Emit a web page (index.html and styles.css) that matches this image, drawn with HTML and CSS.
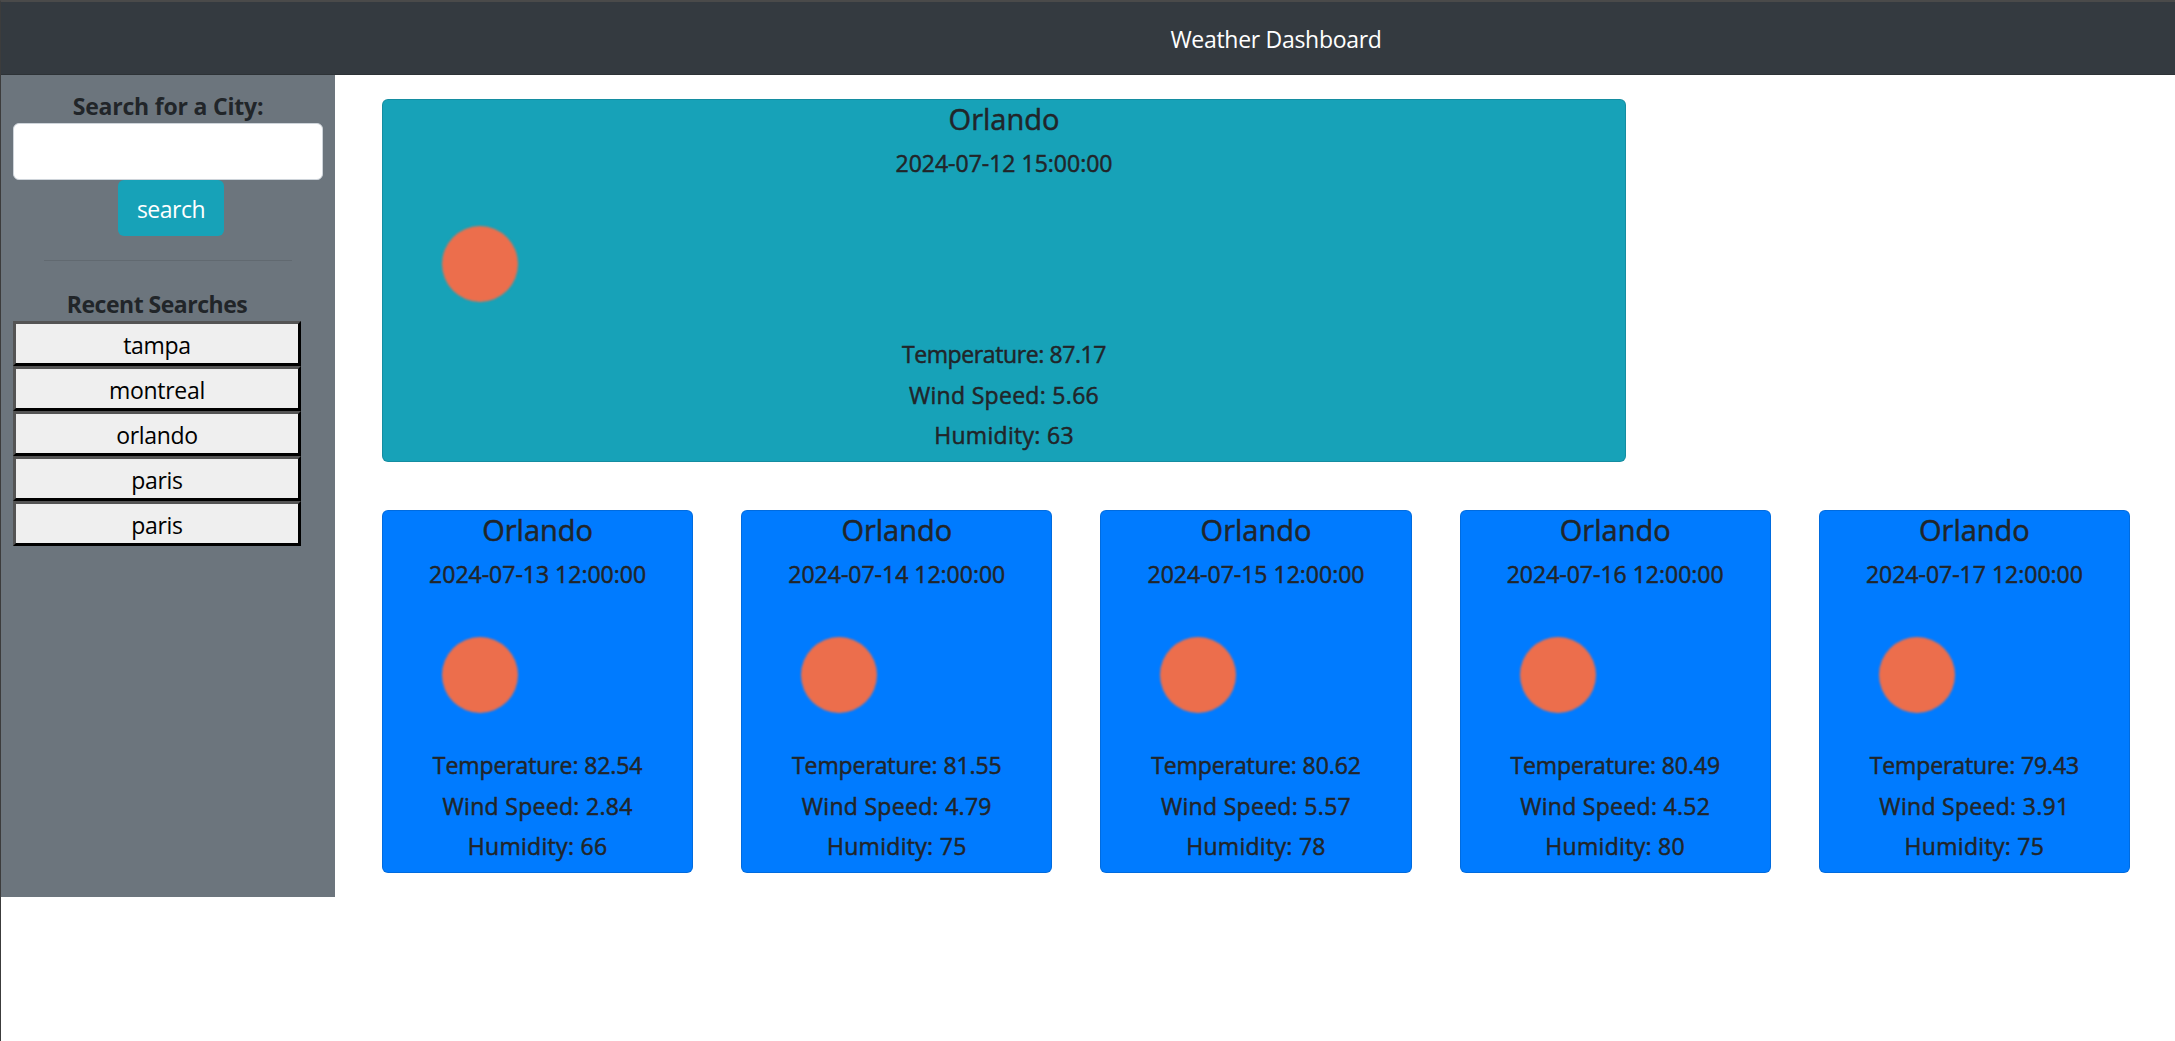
FILE: index.html
```
<!DOCTYPE html>
<html lang="en">
<head>
<meta charset="utf-8">
<title>Weather Dashboard</title>
<link rel="stylesheet" href="styles.css">
</head>
<body>
<header class="navbar"><span class="brand">Weather Dashboard</span></header>
<div class="layout">
  <aside class="sidebar">
    <form class="search">
      <label class="label" for="city">Search for a City:</label>
      <input class="input" id="city" type="text">
      <button class="submit" type="button">search</button>
    </form>
    <hr class="divider">
    <section class="recent">
      <h2 class="recent-title">Recent Searches</h2>
      <button class="recent-item" type="button">tampa</button>
      <button class="recent-item" type="button">montreal</button>
      <button class="recent-item" type="button">orlando</button>
      <button class="recent-item" type="button">paris</button>
      <button class="recent-item" type="button">paris</button>
    </section>
  </aside>
  <main class="content">
    <article class="card today">
      <h3 class="city">Orlando</h3>
      <p class="date">2024-07-12 15:00:00</p>
      <svg class="icon" viewBox="0 0 150 150"><circle cx="75" cy="75" r="38"/></svg>
      <p class="stat temperature">Temperature: 87.17</p>
      <p class="stat">Wind Speed: 5.66</p>
      <p class="stat">Humidity: 63</p>
    </article>
    <div class="forecast">
      <article class="card">
        <h3 class="city">Orlando</h3>
        <p class="date">2024-07-13 12:00:00</p>
        <svg class="icon" viewBox="0 0 150 150"><circle cx="75" cy="75" r="38"/></svg>
        <p class="stat temperature">Temperature: 82.54</p>
        <p class="stat">Wind Speed: 2.84</p>
        <p class="stat">Humidity: 66</p>
      </article>
      <article class="card">
        <h3 class="city">Orlando</h3>
        <p class="date">2024-07-14 12:00:00</p>
        <svg class="icon" viewBox="0 0 150 150"><circle cx="75" cy="75" r="38"/></svg>
        <p class="stat temperature">Temperature: 81.55</p>
        <p class="stat">Wind Speed: 4.79</p>
        <p class="stat">Humidity: 75</p>
      </article>
      <article class="card">
        <h3 class="city">Orlando</h3>
        <p class="date">2024-07-15 12:00:00</p>
        <svg class="icon" viewBox="0 0 150 150"><circle cx="75" cy="75" r="38"/></svg>
        <p class="stat temperature">Temperature: 80.62</p>
        <p class="stat">Wind Speed: 5.57</p>
        <p class="stat">Humidity: 78</p>
      </article>
      <article class="card">
        <h3 class="city">Orlando</h3>
        <p class="date">2024-07-16 12:00:00</p>
        <svg class="icon" viewBox="0 0 150 150"><circle cx="75" cy="75" r="38"/></svg>
        <p class="stat temperature">Temperature: 80.49</p>
        <p class="stat">Wind Speed: 4.52</p>
        <p class="stat">Humidity: 80</p>
      </article>
      <article class="card">
        <h3 class="city">Orlando</h3>
        <p class="date">2024-07-17 12:00:00</p>
        <svg class="icon" viewBox="0 0 150 150"><circle cx="75" cy="75" r="38"/></svg>
        <p class="stat temperature">Temperature: 79.43</p>
        <p class="stat">Wind Speed: 3.91</p>
        <p class="stat">Humidity: 75</p>
      </article>
    </div>
  </main>
</div>
</body>
</html>
```
FILE: styles.css
```
* { box-sizing: border-box; }

body {
  margin: 0;
  min-height: 1041px;
  border-top: 2px solid #4a4a4a;
  border-left: 1px solid #3c3c3c;
  background: #fff;
  color: #212529;
  font-family: "Segoe UI", "Open Sans", "Noto Sans", sans-serif;
  font-size: 23px;
  line-height: 36px;
}

h2, h3, p { margin: 0; }

.navbar {
  display: flex;
  justify-content: center;
  height: 73px;
  padding: 19px 0 0 376px;
  border-bottom: 1px solid #2d3236;
  background: #343a40;
  color: #fff;
  letter-spacing: -0.3px;
}

.layout {
  display: flex;
  align-items: flex-start;
}

.sidebar {
  width: 334px;
  height: 822px;
  padding: 12px;
  background: #6c757d;
}

.search {
  display: flex;
  flex-direction: column;
  align-items: center;
}

.label {
  height: 36px;
  padding-top: 1px;
  font-weight: 700;
  letter-spacing: -0.2px;
}

.input {
  width: 310px;
  height: 57px;
  border: 1px solid #ced4da;
  border-radius: 6px;
  background: #fff;
}

.submit {
  width: 106px;
  height: 56px;
  margin-left: 6px;
  padding: 1px 0 0;
  border: 0;
  border-radius: 6px;
  background: #17a2b8;
  color: #fff;
  font: inherit;
  letter-spacing: -0.5px;
}

.divider {
  width: 248px;
  margin: 24px auto;
  border: 0;
  border-top: 1px solid #616970;
}

.recent {
  display: flex;
  flex-direction: column;
  width: 288px;
}

.recent-title {
  height: 36px;
  padding-top: 1px;
  font-size: 23px;
  letter-spacing: -0.5px;
  text-align: center;
}

.recent-item {
  height: 45px;
  padding: 2px 0 0;
  border: 3px outset #000;
  border-radius: 0;
  background: #efefef;
  color: #000;
  font: inherit;
  letter-spacing: -0.3px;
}

.content {
  flex: 1;
  padding: 24px 45px 0 47px;
}

.card {
  height: 363px;
  padding-top: 1px;
  border: 1px solid rgba(0, 0, 0, 0.125);
  border-radius: 6px;
  background: #007bff;
  text-align: center;
  font-weight: 500;
  -webkit-text-stroke: 0.5px #212529;
}

.today {
  width: 1244px;
  margin-bottom: 48px;
  background: #17a2b8;
}

.forecast {
  display: grid;
  grid-template-columns: repeat(5, 1fr);
  gap: 48px;
}

.city {
  margin-bottom: 12px;
  font-size: 29px;
  font-weight: 500;
  line-height: 36px;
}

.date,
.stat {
  margin-bottom: 12px;
  line-height: 28.8px;
}

.stat {
  letter-spacing: 0.3px;
}

.temperature {
  letter-spacing: -0.1px;
}

.today .temperature {
  letter-spacing: -0.4px;
}

.icon {
  display: block;
  width: 150px;
  height: 150px;
  margin: -1px 0 1px 22px;
  fill: #ec6e4c;
  stroke: none;
  filter: blur(0.8px);
}
```
